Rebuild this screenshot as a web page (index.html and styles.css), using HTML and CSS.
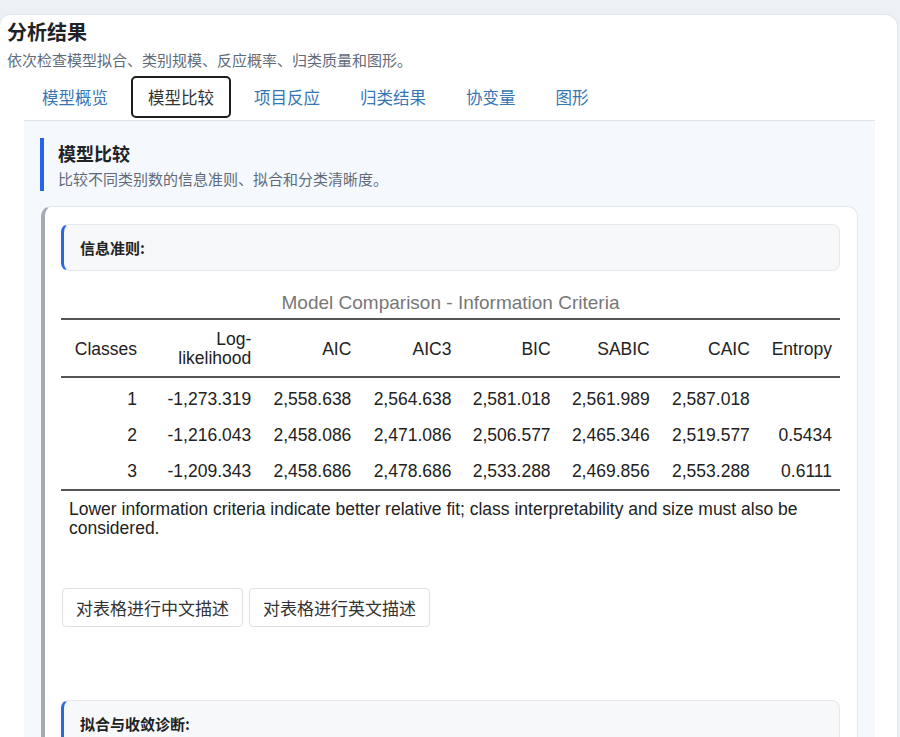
FILE: index.html
```html
<!DOCTYPE html>
<html lang="zh">
<head>
<meta charset="utf-8">
<title>分析结果</title>
<link rel="stylesheet" href="styles.css">
</head>
<body>
<div class="page">
  <div class="results">
    <h1 class="results-title">分析结果</h1>
    <p class="results-sub">依次检查模型拟合、类别规模、反应概率、归类质量和图形。</p>
    <nav class="tabs">
      <span class="tab">模型概览</span>
      <span class="tab active">模型比较</span>
      <span class="tab">项目反应</span>
      <span class="tab">归类结果</span>
      <span class="tab">协变量</span>
      <span class="tab">图形</span>
    </nav>
    <section class="panel">
      <div class="section-head">
        <h2 class="section-title">模型比较</h2>
        <p class="section-sub">比较不同类别数的信息准则、拟合和分类清晰度。</p>
      </div>
      <div class="card">
        <div class="block">
          <div class="subhead">信息准则:</div>
          <div class="caption">Model Comparison - Information Criteria</div>
          <table class="stats">
            <colgroup>
              <col class="c1"><col class="c2"><col class="c3"><col class="c3"><col class="c4"><col class="c4"><col class="c3"><col class="c5">
            </colgroup>
            <thead>
              <tr><th>Classes</th><th>Log-<br>likelihood</th><th>AIC</th><th>AIC3</th><th>BIC</th><th>SABIC</th><th>CAIC</th><th>Entropy</th></tr>
            </thead>
            <tbody>
              <tr><td>1</td><td>-1,273.319</td><td>2,558.638</td><td>2,564.638</td><td>2,581.018</td><td>2,561.989</td><td>2,587.018</td><td></td></tr>
              <tr><td>2</td><td>-1,216.043</td><td>2,458.086</td><td>2,471.086</td><td>2,506.577</td><td>2,465.346</td><td>2,519.577</td><td>0.5434</td></tr>
              <tr><td>3</td><td>-1,209.343</td><td>2,458.686</td><td>2,478.686</td><td>2,533.288</td><td>2,469.856</td><td>2,553.288</td><td>0.6111</td></tr>
            </tbody>
          </table>
          <p class="note">Lower information criteria indicate better relative fit; class interpretability and size must also be considered.</p>
          <div class="actions">
            <button class="btn">对表格进行中文描述</button>
            <button class="btn">对表格进行英文描述</button>
          </div>
        </div>
        <div class="block next">
          <div class="subhead">拟合与收敛诊断:</div>
        </div>
      </div>
    </section>
  </div>
</div>
</body>
</html>
```

FILE: styles.css
```css
html, body {
  margin: 0;
  padding: 0;
}
body {
  background: #edf1f6;
  font-family: "Liberation Sans", "Noto Sans CJK SC", sans-serif;
  color: #222;
  height: 737px;
  overflow: hidden;
}
.page {
  padding-top: 15px;
}
.results {
  background: #ffffff;
  width: 890px;
  margin-right: 3px;
  padding: 4px 0 0 7px;
  border-radius: 10px 12px 0 0;
  box-shadow: 0 0 2px rgba(120, 140, 170, 0.25);
}
.results-title {
  margin: 0;
  font-family: "Noto Sans CJK SC", sans-serif;
  font-size: 20px;
  font-weight: 700;
  line-height: 26px;
  color: #1f2328;
}
.results-sub {
  margin: 5px 0 0;
  font-family: "Noto Sans CJK SC", sans-serif;
  font-size: 15px;
  line-height: 20px;
  color: #5f6b7a;
}
.tabs {
  display: flex;
  gap: 6px;
  margin: 6px 22px 0 17px;
  padding: 0 0 2px 1px;
  border-bottom: 1px solid #dfe3e8;
}
.tab {
  font-family: "Noto Sans CJK SC", sans-serif;
  font-size: 16.5px;
  line-height: 38px;
  padding: 0 15px;
  border: 2px solid transparent;
  border-radius: 5px;
  color: #3676b4;
}
.tab.active {
  border-color: #1d1d1d;
  color: #333;
}
.panel {
  margin: 0 22px 0 17px;
  background: #f5f9fd;
  padding: 17px 17px 0 16px;
}
.section-head {
  border-left: 4px solid #2563eb;
  padding: 3px 0 2px 14px;
}
.section-title {
  margin: 0;
  font-family: "Noto Sans CJK SC", sans-serif;
  font-size: 18px;
  font-weight: 700;
  line-height: 24px;
  color: #1f2328;
}
.section-sub {
  margin: 4px 0 0;
  font-family: "Noto Sans CJK SC", sans-serif;
  font-size: 15px;
  line-height: 20px;
  color: #5f6b7a;
}
.card {
  margin: 15px 0 0 1px;
  background: #ffffff;
  border: 1px solid #e3e7ec;
  border-left: 4px solid #a3abb7;
  border-radius: 10px;
  padding: 17px 17px 10px 16px;
}
.subhead {
  height: 45px;
  display: flex;
  align-items: center;
  background: #f7f8fa;
  border: 1px solid #e6e8ec;
  border-left: 3px solid #2b67e0;
  border-radius: 8px;
  padding-left: 16px;
  font-family: "Noto Sans CJK SC", sans-serif;
  font-size: 15px;
  font-weight: 700;
  color: #222;
}
.caption {
  margin-top: 20px;
  text-align: center;
  font-size: 19px;
  line-height: 24px;
  color: #777;
}
.stats {
  width: 100%;
  margin-top: 3px;
  border-collapse: collapse;
  table-layout: fixed;
  border-top: 2px solid #555;
  border-bottom: 2px solid #555;
  font-size: 17.5px;
  color: #222;
}
.stats col.c1 { width: 84px; }
.stats col.c2 { width: 114px; }
.stats col.c3 { width: 100px; }
.stats col.c4 { width: 99px; }
.stats col.c5 { width: 82px; }
.stats th {
  font-weight: 400;
  text-align: right;
  padding: 10px 8px 8px 0;
  line-height: 19px;
  border-bottom: 2px solid #555;
  vertical-align: middle;
}
.stats td {
  text-align: right;
  padding: 0 8px 0 0;
  height: 36px;
  line-height: 19px;
}
.stats tbody tr:first-child td {
  padding-top: 3px;
}
.note {
  margin: 9px 0 0;
  padding-left: 8px;
  font-size: 17.5px;
  line-height: 19px;
  color: #222;
}
.actions {
  display: flex;
  gap: 6px;
  margin-top: 50px;
  padding-left: 1px;
}
.btn {
  font-family: "Noto Sans CJK SC", sans-serif;
  font-size: 17px;
  line-height: 19px;
  padding: 9px 13px;
  background: #ffffff;
  border: 1px solid #dcdfe4;
  border-radius: 4px;
  color: #333;
}
.block.next {
  margin-top: 73px;
}
```
